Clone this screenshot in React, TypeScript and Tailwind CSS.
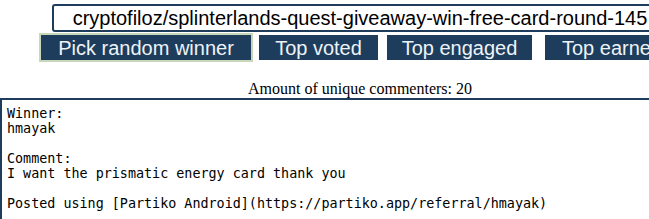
const buttons = [
  { label: "Pick random winner", w: "w-[210px]", ml: "ml-0", focused: true },
  { label: "Top voted", w: "w-[119px]", ml: "ml-[8px]", focused: false },
  { label: "Top engaged", w: "w-[145px]", ml: "ml-[9px]", focused: false },
  { label: "Top earned", w: "w-[134px]", ml: "ml-[13px]", focused: false },
];

const comment = `Winner:
hmayak

Comment:
I want the prismatic energy card thank you

Posted using [Partiko Android](https://partiko.app/referral/hmayak)`;

export default function App() {
  return (
    <div className="w-[649px] h-[219px] overflow-hidden bg-white">
      <div className="w-[720px] flex flex-col">
        {/* permlink */}
        <div className="mt-[4px] ml-[52px] w-[616px] h-[28px] border-2 border-[#1e3d5c] rounded-[3px] flex items-center justify-center text-[20px] text-black font-['Liberation_Sans',Arial,sans-serif] whitespace-nowrap">
          cryptofiloz/splinterlands-quest-giveaway-win-free-card-round-145
        </div>

        {/* actions */}
        <div className="flex pl-[41px] mt-[3px]">
          {buttons.map((b) => (
            <button
              key={b.label}
              className={`${b.w} ${b.ml} h-[25px] bg-[#1e3d5c] text-[#eef3f8] text-[20px] leading-none flex items-center justify-center whitespace-nowrap font-['Liberation_Sans',Arial,sans-serif] ${
                b.focused ? "outline-2 outline-[#c8d6b9]" : ""
              }`}
            >
              {b.label}
            </button>
          ))}
        </div>

        <p className="mt-[20px] text-center text-[16px] leading-[18px] text-black font-['Liberation_Serif','Times_New_Roman',serif]">
          Amount of unique commenters: 20
        </p>

        {/* result */}
        <div className="border-t-[2px] border-l-[2px] border-[#1e3d5c] pt-[6px] pl-[5px] h-[200px] text-[13.4px] leading-[15px] text-black whitespace-pre font-['DejaVu_Sans_Mono',monospace]">
          {comment}
        </div>
      </div>
    </div>
  );
}
